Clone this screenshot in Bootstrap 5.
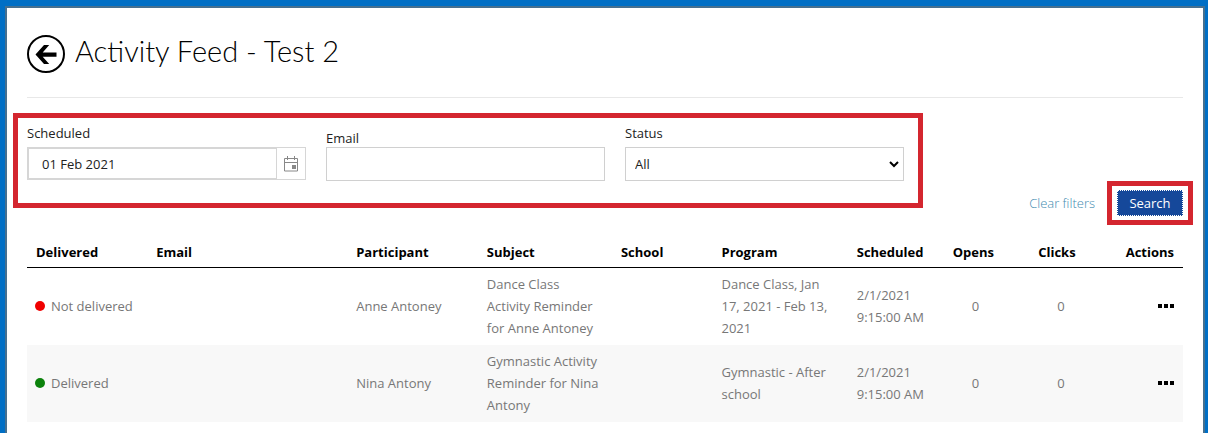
<!DOCTYPE html>
<html lang="en">
<head>
<meta charset="utf-8">
<meta name="viewport" content="width=device-width, initial-scale=1">
<title>Activity Feed - Test 2</title>
<link href="https://cdn.jsdelivr.net/npm/bootstrap@5.3.0/dist/css/bootstrap.min.css" rel="stylesheet">
<style>
  body {
    background: #006fc5;
    font: 13px/22px "Open Sans", "Noto Sans", sans-serif;
    color: #222;
    padding: 6px 3px 0 5px;
  }
  .feed-page {
    background: #fff;
    border: 2px solid #46708f;
    border-bottom: 0;
    padding: 27px 20px 0;
    min-height: calc(100vh - 6px);
  }
  .feed-head { height: 63px; border-bottom: 1px solid #e8e8e8; gap: 10px; }
  .feed-head h1 { font: 300 29px/32px Lato, sans-serif; color: #000; margin: 0; }
  .back-link { width: 38px; height: 38px; }
  .filter-row { margin: 15px -10px 0 -14px; }
  .callout { border: 5px solid #d4262f; }
  .filter-box { padding: 6px 14px 22px 9px; gap: 20px; margin-bottom: 17px; }
  .filter-box > div { flex: 1 1 0; min-width: 0; }
  .filter-box label { display: block; line-height: 18px; margin-bottom: 5px; }
  .filter-box .label-low { padding-top: 5px; margin-bottom: 0; }
  .filter-box .form-control, .filter-box .form-select {
    height: 34px; border: 1px solid #d0d0d0; border-radius: 0;
    font-size: 13px; line-height: 20px; color: #222; padding: 0 9px;
  }
  .filter-box .form-select {
    background-image: url("data:image/svg+xml,%3Csvg xmlns='http://www.w3.org/2000/svg' viewBox='0 0 10 7'%3E%3Cpath d='M1 1l4 4 4-4' fill='none' stroke='%23000' stroke-width='2'/%3E%3C/svg%3E");
    background-size: 10px 7px; background-position: right 4px center;
  }
  .date-group { height: 33px; border: 1px solid #d6d6d6; }
  .date-group .form-control { height: 31px; border-color: #d6d6d6; padding-left: 13px; }
  .date-group button { width: 28px; padding: 0; border: 0; background: #fff; }
  .filter-actions { width: 270px; gap: 12px; }
  .filter-actions a { color: #3f8bb0; text-decoration: none; font-weight: 300; }
  .search-wrap { padding: 4px 0; }
  .search-wrap .btn {
    width: 66px; height: 26px; padding: 0; margin: 0 5px; border: 1px dotted #fff; border-radius: 0;
    background: #15489a; color: #fff; font-size: 13px; line-height: 22px;
  }
  .feed-table { table-layout: fixed; margin: 12px 0 0; width: 100%; }
  .feed-table th, .feed-table td { padding: 5px 9px 6px; vertical-align: middle; text-align: left; color: #777; }
  .feed-table th { color: #000; font-weight: 700; white-space: nowrap; padding: 4px 9px; border-bottom: 1px solid #000; }
  .feed-table tbody tr:nth-child(even) { background: #f8f8f8; }
  .feed-table td:first-child { padding-left: 8px; white-space: nowrap; }
  .feed-table td:nth-child(4) { padding-right: 12px; }
  .feed-table td:nth-child(6) { padding-right: 14px; }
  .feed-table td.count { padding-left: 28px; }
  .feed-table .act { text-align: right; }
  .dot { display: inline-block; width: 10px; height: 10px; border-radius: 50%; background: #f00000; margin-right: 6px; }
  .dot-ok { background: #0b820b; }
  .more-btn { display: block; margin-left: auto; border: 0; background: none; padding: 0; }
</style>
</head>
<body>
<main class="feed-page">
  <header class="feed-head d-flex align-items-start">
    <a class="back-link d-block" href="#" aria-label="Back">
      <svg class="d-block" width="38" height="38" viewBox="0 0 38 38"><circle cx="19" cy="19" r="18" fill="none" stroke="#000" stroke-width="2"/><path d="M8.500 19.500L17 10h5.200l-6.500 7.500H29.500v4.200H15.700l6.500 7.300H17z" fill="#000"/></svg>
    </a>
    <h1>Activity Feed - Test 2</h1>
  </header>

  <form class="filter-row d-flex align-items-end">
    <div class="filter-box callout d-flex flex-grow-1">
      <div>
        <label for="scheduled">Scheduled</label>
        <div class="date-group d-flex">
          <input class="form-control" type="text" id="scheduled" value="01 Feb 2021">
          <button type="button" class="d-flex align-items-center justify-content-center flex-shrink-0" aria-label="Choose date">
            <svg width="15" height="16" viewBox="0 0 15 16"><path d="M.5 2.500h13v12.500H.5zM.5 6.500h13M3.500 0v4M10.500 0v4" fill="none" stroke="#888"/><path d="M8 9h4v4H8z" fill="#888"/></svg>
          </button>
        </div>
      </div>
      <div>
        <label class="label-low" for="email">Email</label>
        <input class="form-control" type="text" id="email">
      </div>
      <div>
        <label for="status">Status</label>
        <select class="form-select" id="status"><option>All</option></select>
      </div>
    </div>
    <div class="filter-actions d-flex align-items-center justify-content-end flex-shrink-0">
      <a href="#">Clear filters</a>
      <div class="search-wrap callout d-flex"><button type="button" class="btn">Search</button></div>
    </div>
  </form>

  <table class="feed-table">
    <colgroup>
      <col style="width:10.4%"><col style="width:17.3%"><col style="width:11.3%"><col style="width:11.6%"><col style="width:8.7%"><col style="width:11.7%"><col style="width:8.3%"><col style="width:7.4%"><col style="width:7.3%"><col style="width:6%">
    </colgroup>
    <thead>
      <tr><th>Delivered</th><th>Email</th><th>Participant</th><th>Subject</th><th>School</th><th>Program</th><th>Scheduled</th><th>Opens</th><th>Clicks</th><th class="act">Actions</th></tr>
    </thead>
    <tbody>
      <tr>
        <td><span class="dot"></span>Not delivered</td><td></td><td>Anne Antoney</td>
        <td>Dance Class Activity Reminder for Anne Antoney</td><td></td>
        <td>Dance Class, Jan 17, 2021 - Feb 13, 2021</td><td>2/1/2021 9:15:00 AM</td>
        <td class="count">0</td><td class="count">0</td>
        <td class="act"><button type="button" class="more-btn" aria-label="More actions"><svg class="d-block" width="16" height="4" viewBox="0 0 16 4"><path d="M0 0h4v4H0zM6 0h4v4H6zM12 0h4v4h-4z"/></svg></button></td>
      </tr>
      <tr>
        <td><span class="dot dot-ok"></span>Delivered</td><td></td><td>Nina Antony</td>
        <td>Gymnastic Activity Reminder for Nina Antony</td><td></td>
        <td>Gymnastic - After school</td><td>2/1/2021 9:15:00 AM</td>
        <td class="count">0</td><td class="count">0</td>
        <td class="act"><button type="button" class="more-btn" aria-label="More actions"><svg class="d-block" width="16" height="4" viewBox="0 0 16 4"><path d="M0 0h4v4H0zM6 0h4v4H6zM12 0h4v4h-4z"/></svg></button></td>
      </tr>
    </tbody>
  </table>
</main>
<script src="https://cdn.jsdelivr.net/npm/bootstrap@5.3.0/dist/js/bootstrap.bundle.min.js"></script>
</body>
</html>
